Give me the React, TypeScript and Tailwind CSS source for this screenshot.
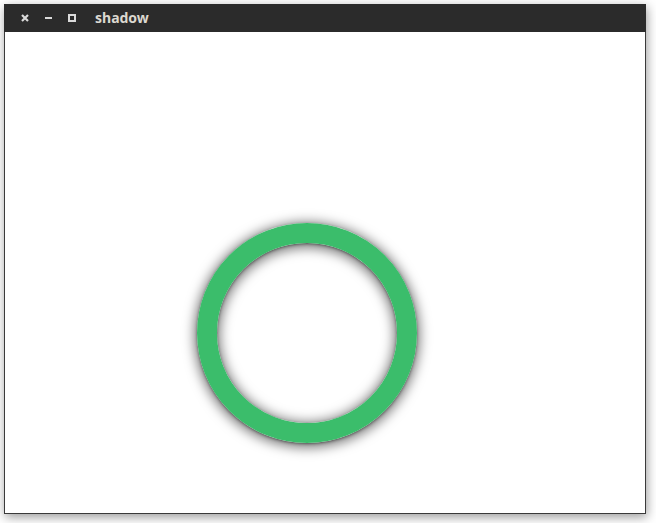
import React from 'react';

function TitleBar() {
  return (
    <div className="flex h-[28px] items-center bg-[#2b2b2b] pl-[17px]">
      <div className="flex items-center gap-[16px]">
        <svg width="8" height="8" viewBox="0 0 8 8">
          <path d="M1 1 L7 7 M7 1 L1 7" stroke="#dadada" strokeWidth="2.2" strokeLinecap="butt" />
        </svg>
        <div className="h-[2px] w-[7px] bg-[#dadada]" />
        <div className="h-[8px] w-[8px] border-2 border-[#dadada]" />
      </div>
      <span className="ml-[19px] text-[14px] font-bold leading-none text-[#dcd8d0] [font-family:'Noto_Sans',sans-serif]">
        shadow
      </span>
    </div>
  );
}

export default function App() {
  return (
    <div className="h-[523px] w-[656px] bg-white pl-[4px] pt-[4px]">
      <div className="flex h-[510px] w-[642px] flex-col shadow-[1px_3px_10px_rgba(0,0,0,0.4)]">
        <TitleBar />
        <div className="flex-1 border-x border-b border-[#3a3a3a] bg-white">
          <div className="ml-[192px] mt-[191px] h-[220px] w-[220px] rounded-full border-[20px] border-[#3bbd6b] shadow-[0_1px_3px_rgba(0,0,0,0.45),0_2px_12px_3px_rgba(0,0,0,0.5),inset_0_1px_3px_rgba(0,0,0,0.45),inset_0_2px_12px_3px_rgba(0,0,0,0.5)]" />
        </div>
      </div>
    </div>
  );
}
